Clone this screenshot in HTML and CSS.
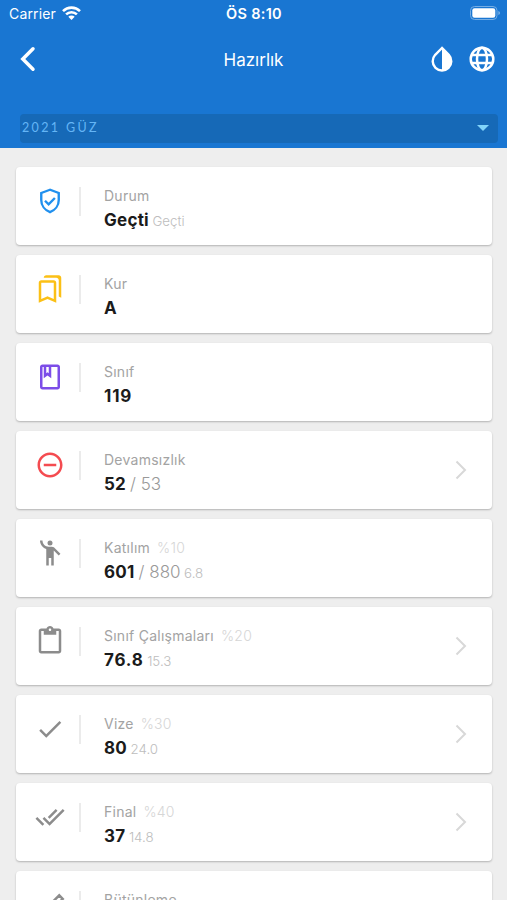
FILE: index.html
```html
<!DOCTYPE html>
<html lang="tr">
<head>
<meta charset="utf-8">
<title>Hazırlık</title>
<link rel="stylesheet" href="styles.css">
</head>
<body>
<header class="header">
  <div class="status">
    <div class="carrier"><span>Carrier</span>
      <svg width="19" height="14" viewBox="0 0 19 14" fill="none" stroke="#fff" stroke-width="2.6"><path d="M1 5.1a12.2 12.2 0 0 1 17 0M4.1 8.4a7.7 7.7 0 0 1 10.8 0"/><path d="M6.3 10.8a4.6 4.6 0 0 1 6.4 0L9.5 14z" fill="#fff" stroke="none"/></svg>
    </div>
    <div class="clock">ÖS 8:10</div>
    <svg class="battery" width="31" height="14" viewBox="0 0 31 14"><rect x=".5" y=".5" width="26.5" height="13" rx="4" fill="none" stroke="#75ade4"/><rect x="2.3" y="2.3" width="23" height="9.4" rx="2.2" fill="#fff"/><path d="M28.3 5v4q1.8-.7 1.8-2t-1.8-2" fill="#75ade4"/></svg>
  </div>
  <nav class="nav">
    <svg class="back" width="16" height="26" viewBox="0 0 16 26" fill="none" stroke="#fff" stroke-width="3.5" stroke-linecap="round"><path d="M13 2.8 2.8 13 13 23.2"/></svg>
    <h1 class="title">Hazırlık</h1>
    <div class="actions">
      <svg width="24" height="26" viewBox="0 0 24 26"><path d="M12 2 5.200 8.800a9.300 9.300 0 1 0 13.600 0z" fill="none" stroke="#fff" stroke-width="2.400"/><path d="M12 2 18.800 8.800A9.300 9.300 0 0 1 12 24.500z" fill="#fff"/></svg>
      <svg width="26" height="26" viewBox="0 0 26 26" fill="none" stroke="#fff" stroke-width="2.5"><circle cx="13" cy="13" r="11.3"/><ellipse cx="13" cy="13" rx="5" ry="11.3"/><path d="M3 9h20M3 17h20"/></svg>
    </div>
  </nav>
  <div class="select"><span>2021 GÜZ</span><i class="caret"></i></div>
</header>
<main class="list">
  <section class="card">
    <svg class="icon blue" viewBox="0 0 24 24"><path d="M12 3 5 5.6v5.5c0 4.5 2.900 8.300 7 9.800 4.100-1.500 7-5.300 7-9.800V5.600zM8 11.800l2.900 2.900 5-5.100" fill="none" stroke="currentColor" stroke-width="1.900"/></svg>
    <div class="body"><div class="label">Durum</div><div class="value"><b>Geçti</b><small>Geçti</small></div></div>
  </section>
  <section class="card">
    <svg class="icon yellow" viewBox="0 0 24 24"><path d="M15 7v12.970l-4.210-1.810-.79-.34-.79.34L5 19.970V7h10m4-6H8.990C7.890 1 7 1.900 7 3h10c1.100 0 2 .9 2 2v13l2 1V3c0-1.100-.9-2-2-2zm-4 4H5c-1.100 0-2 .9-2 2v16l7-3 7 3V7c0-1.100-.9-2-2-2z"/></svg>
    <div class="body"><div class="label">Kur</div><div class="value"><b>A</b></div></div>
  </section>
  <section class="card">
    <svg class="icon purple" viewBox="0 0 24 24"><path d="M18 2H6c-1.100 0-2 .9-2 2v16c0 1.100.9 2 2 2h12c1.100 0 2-.9 2-2V4c0-1.100-.9-2-2-2zM9 4h2v5l-1-.75L9 9V4zm9 16H6V4h1v9l3-2.250L13 13V4h5v16z"/></svg>
    <div class="body"><div class="label">Sınıf</div><div class="value"><b class="wide">119</b></div></div>
  </section>
  <section class="card">
    <svg class="icon red" viewBox="0 0 24 24"><path d="M7 11v2h10v-2H7zm5-9C6.480 2 2 6.480 2 12s4.480 10 10 10 10-4.480 10-10S17.520 2 12 2zm0 18c-4.410 0-8-3.590-8-8s3.590-8 8-8 8 3.590 8 8-3.590 8-8 8z"/></svg>
    <div class="body"><div class="label">Devamsızlık</div><div class="value"><b>52</b><span class="total">/ 53</span></div></div>
    <svg class="chevron" viewBox="0 0 12 20"><path d="m1.500 1.500 8.500 8.500-8.500 8.500"/></svg>
  </section>
  <section class="card">
    <svg class="icon" viewBox="0 0 24 24"><circle cx="12" cy="4" r="2"/><path d="M15.890 8.110C15.500 7.720 14.830 7 13.530 7h-2.540C8.240 6.990 6 4.750 6 2H4c0 3.160 2.110 5.840 5 6.710V22h2v-6h2v6h2V10.050L18.950 14l1.410-1.410z"/></svg>
    <div class="body"><div class="label">Katılım<span class="weight">%10</span></div><div class="value"><b>601</b><span class="total">/ 880</span><small>6.8</small></div></div>
  </section>
  <section class="card">
    <svg class="icon" viewBox="0 0 24 24"><path d="M19 2h-4.180C14.400.84 13.300 0 12 0S9.600.84 9.180 2H5c-1.100 0-2 .9-2 2v16c0 1.100.9 2 2 2h14c1.100 0 2-.9 2-2V4c0-1.100-.9-2-2-2zm-7 0c.55 0 1 .45 1 1s-.45 1-1 1-1-.45-1-1 .45-1 1-1zm7 18H5V4h2v3h10V4h2v16z"/></svg>
    <div class="body"><div class="label">Sınıf Çalışmaları<span class="weight">%20</span></div><div class="value"><b class="wide">76.8</b><small>15.3</small></div></div>
    <svg class="chevron" viewBox="0 0 12 20"><path d="m1.500 1.500 8.500 8.500-8.500 8.500"/></svg>
  </section>
  <section class="card">
    <svg class="icon" viewBox="0 0 24 24"><path d="M9 16.200 4.800 12l-1.400 1.400L9 19 21 7l-1.400-1.400z"/></svg>
    <div class="body"><div class="label">Vize<span class="weight">%30</span></div><div class="value"><b>80</b><small>24.0</small></div></div>
    <svg class="chevron" viewBox="0 0 12 20"><path d="m1.500 1.500 8.500 8.500-8.500 8.500"/></svg>
  </section>
  <section class="card">
    <svg class="icon" viewBox="0 0 24 24"><path d="m18 7-1.410-1.410-6.340 6.340 1.410 1.410L18 7zm4.240-1.410L11.660 16.170 7.480 12l-1.410 1.410L11.660 19l12-12-1.420-1.410zM.41 13.410 6 19l1.410-1.410L1.830 12 .41 13.410z"/></svg>
    <div class="body"><div class="label">Final<span class="weight">%40</span></div><div class="value"><b>37</b><small>14.8</small></div></div>
    <svg class="chevron" viewBox="0 0 12 20"><path d="m1.500 1.500 8.500 8.500-8.500 8.500"/></svg>
  </section>
  <section class="card">
    <svg class="icon" viewBox="0 0 24 24"><path d="M5 18.500 19.400 4.300l2.800 2.800L8 21.300H5z" fill="none" stroke="currentColor" stroke-width="2"/></svg>
    <div class="body"><div class="label">Bütünleme</div></div>
  </section>
</main>
</body>
</html>
```

FILE: styles.css
```css
* { box-sizing: border-box; }
body { margin: 0; height: 900px; overflow: hidden; background: #eee; font-family: Inter, "Liberation Sans", sans-serif; }
svg { display: block; flex: none; }
.header { height: 147.5px; background: #1976d2; color: #fff; }
.status { height: 27px; padding: 0 6px 0 7px; display: grid; grid-template-columns: 1fr auto 1fr; align-items: center; font-size: 14px; }
.carrier { display: flex; align-items: center; gap: 6px; letter-spacing: .15px; padding-left: 2px; }
.carrier svg { margin-top: -1px; }
.clock { font-weight: 600; font-size: 14.5px; letter-spacing: .3px; }
.battery { justify-self: end; margin-top: -1px; }
.nav { height: 65px; padding: 0 12px; display: grid; grid-template-columns: 1fr auto 1fr; align-items: center; }
.back { margin-left: 8px; }
.title { margin: 0; font-size: 17px; font-weight: 400; }
.actions { display: flex; justify-content: flex-end; gap: 15px; }
.nav svg { margin-top: -1px; }
.select { height: 29px; margin: 22px 9px 0 20px; padding: 0 9px 0 2px; border-radius: 4px; background: #1669b7; display: flex; align-items: center; justify-content: space-between; color: #64b5f6; font: 12.5px Lato, sans-serif; letter-spacing: 2.35px; }
.select span { margin-top: -2px; }
.caret { border: 6px solid transparent; border-top-color: #81d4fa; border-bottom: 0; margin-top: -1px; }
.list { padding: 19.5px 15px 0 16px; display: flex; flex-direction: column; gap: 10px; }
.card { height: 78px; flex: none; background: #fff; border-radius: 4px; box-shadow: 0 1px 2px rgba(0,0,0,.25); display: flex; align-items: flex-start; padding-left: 19px; }
.icon { width: 30px; height: 30px; margin-top: 18.700px; color: #8c8c8c; fill: currentColor; }
.blue { color: #2190ee; }
.yellow { color: #fbc016; }
.purple { color: #7c4de8; }
.red { color: #f44b50; }
.body { position: relative; margin-left: 14px; padding: 19px 0 0 25px; flex: 1; white-space: nowrap; }
.body::before { content: ""; position: absolute; left: 0; top: 20px; width: 2px; height: 29px; background: #ebebeb; }
.label { height: 19px; line-height: 19px; font-size: 14px; color: #a3a3a3; letter-spacing: .25px; }
.weight { margin-left: 7px; color: #d6d6d6; font-weight: 300; }
.value { margin-top: 3px; line-height: 24px; height: 24px; font-size: 17px; color: #1b1b1b; }
.value b { font-weight: 700; letter-spacing: .25px; }
.value .wide { letter-spacing: .8px; }
.total { margin-left: 4px; color: #999; font-weight: 300; }
.value small { margin-left: 3.5px; font-size: 13.3px; color: #bdbdbd; font-weight: 300; }
.chevron { width: 12px; height: 20px; margin: 29px 25px 0 0; fill: none; stroke: #d8d8d8; stroke-width: 2; }
```
